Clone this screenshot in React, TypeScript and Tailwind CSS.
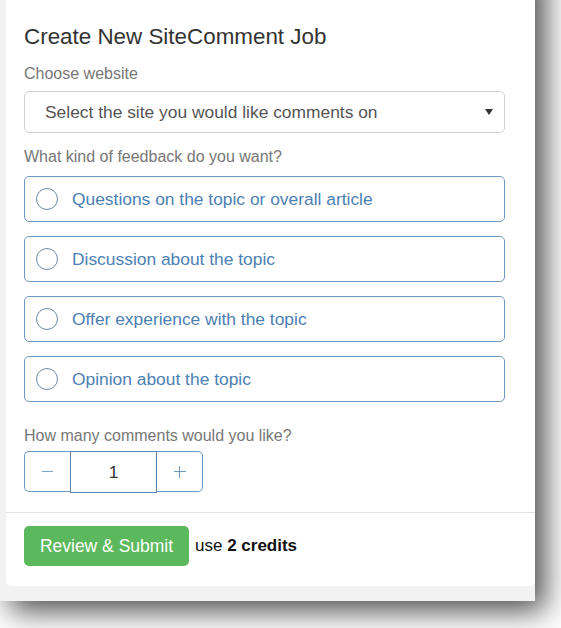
import React from "react";

const options = [
  "Questions on the topic or overall article",
  "Discussion about the topic",
  "Offer experience with the topic",
  "Opinion about the topic",
];

function Option({ label }: { label: string }) {
  return (
    <div className="flex items-center h-[46px] border border-[#6f99c2] rounded-[5px] pl-[11px]">
      <span className="w-[22px] h-[22px] rounded-full border-[1.5px] border-[#6f89a6] shrink-0" />
      <span className="ml-[14px] text-[17.4px] leading-[20px] text-[#4d80b3]">{label}</span>
    </div>
  );
}

export default function App() {
  return (
    <div className="w-[561px] h-[628px] overflow-hidden bg-white font-['Liberation_Sans',Arial,sans-serif]">
      <div className="w-[535px] -mt-[40px] pt-[40px] pl-[6px] pb-[15px] bg-[#f2f2f2] shadow-[10px_10px_28px_rgba(0,0,0,0.7)]">
        <div className="bg-white rounded-b-[5px]">
          <div className="pt-[24px] pl-[18px] pr-[30px] pb-[20px]">
            <h1 className="text-[22.4px] leading-[26px] text-[#333]">Create New SiteComment Job</h1>
            <div className="mt-[14px] text-[16px] leading-[20px] text-[#777]">Choose website</div>
            <div className="mt-[7px] h-[42px] flex items-center justify-between border border-[#d0d0d0] rounded-[5px] pl-[20px] pr-[11px]">
              <span className="text-[17.4px] leading-[20px] text-[#555]">Select the site you would like comments on</span>
              <svg width="8" height="6" viewBox="0 0 8 6">
                <path d="M0 0 L8 0 L4 6 Z" fill="#333" />
              </svg>
            </div>
            <div className="mt-[14px] text-[16px] leading-[20px] text-[#777]">What kind of feedback do you want?</div>
            <div className="mt-[9px] flex flex-col gap-[14px]">
              {options.map((o) => (
                <Option key={o} label={o} />
              ))}
            </div>
            <div className="mt-[24px] text-[16px] leading-[20px] text-[#777]">How many comments would you like?</div>
            <div className="mt-[5px] flex h-[41px]">
              <div className="w-[46px] flex items-center justify-center border border-[#6f99c2] rounded-l-[5px] border-r-0">
                <span className="w-[11px] h-[1.5px] bg-[#7fa4c9]" />
              </div>
              <div className="w-[87px] h-[42px] flex items-center justify-center border border-[#5f86ad] text-[17.4px] text-[#333]">
                1
              </div>
              <div className="w-[46px] flex items-center justify-center border border-[#6f99c2] rounded-r-[5px] border-l-0 relative">
                <span className="w-[12px] h-[1.5px] bg-[#6f99c2]" />
                <span className="absolute w-[1.5px] h-[12px] bg-[#6f99c2]" />
              </div>
            </div>
          </div>
          <div className="border-t border-[#e3e3e3] pt-[13px] pb-[20px] pl-[18px] flex items-center">
            <div className="h-[40px] w-[165px] flex items-center justify-center bg-[#5cb85c] rounded-[5px] text-white text-[17.5px]">
              Review &amp; Submit
            </div>
            <span className="ml-[6px] text-[17px] text-[#111]">
              use <b>2 credits</b>
            </span>
          </div>
        </div>
      </div>
    </div>
  );
}
